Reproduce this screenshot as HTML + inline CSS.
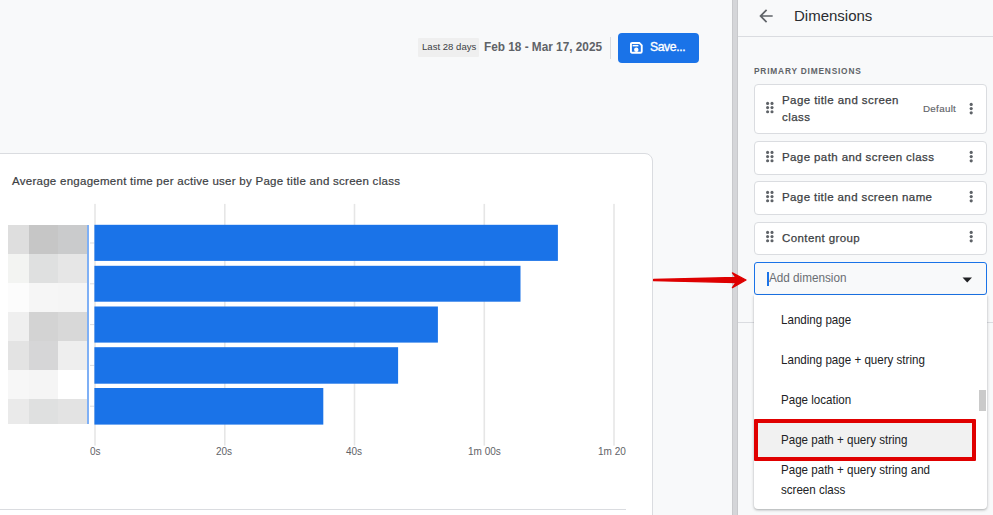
<!DOCTYPE html>
<html><head><meta charset="utf-8">
<style>
*{margin:0;padding:0;box-sizing:border-box}
html,body{width:993px;height:515px;overflow:hidden;background:#f8f9fa;font-family:"Liberation Sans",sans-serif;position:relative}
.a{position:absolute}
.t{position:absolute;white-space:nowrap;line-height:1}
</style></head><body>

<!-- top bar -->
<div class="a" style="left:418px;top:38px;width:61px;height:19px;background:#efefef;border-radius:1px"></div>
<div class="t" style="left:421.5px;top:42.4px;font-size:9.9px;color:#3c4043;transform:scaleX(0.97);transform-origin:0 0">Last 28 days</div>
<div class="t" style="left:484px;top:41.2px;font-size:12.8px;font-weight:700;color:#5f6368;transform:scaleX(0.922);transform-origin:0 0">Feb 18 - Mar 17, 2025</div>
<div class="a" style="left:610px;top:37px;width:1px;height:22px;background:#dadce0"></div>
<div class="a" style="left:618px;top:33px;width:81px;height:30px;background:#1a73e8;border-radius:4px"></div>
<svg class="a" style="left:630px;top:41.5px" width="13" height="12" viewBox="0 0 13 12">
 <path d="M2.2,0.95 H9.3 L11.75,3.4 V9.5 Q11.75,10.75 10.5,10.75 H2.2 Q0.95,10.75 0.95,9.5 V2.2 Q0.95,0.95 2.2,0.95 Z" stroke="#fff" stroke-width="1.9" fill="none"/>
 <rect x="2.6" y="2.9" width="5.8" height="1.5" fill="#fff"/>
 <circle cx="6.3" cy="7.8" r="2.2" fill="#fff"/>
</svg>
<div class="t" style="left:650px;top:40.6px;font-size:12.2px;letter-spacing:-0.4px;-webkit-text-stroke:0.35px #fff;color:#fff">Save...</div>

<!-- chart card -->
<div class="a" style="left:-10px;top:153px;width:663px;height:400px;background:#fff;border:1px solid #dadce0;border-radius:8px"></div>
<div class="t" style="left:12px;top:176px;font-size:11.5px;letter-spacing:0.27px;-webkit-text-stroke:0.2px #3c4043;color:#3c4043">Average engagement time per active user by Page title and screen class</div>

<div class="a" style="left:0;top:153px;width:626px;height:362px;overflow:hidden">
 <svg class="a" style="left:0;top:0" width="626" height="362" viewBox="0 153 626 362">
  <g fill="#e6e6e6">
   <rect x="94.2" y="203.9" width="1.6" height="241.7"/>
   <rect x="224" y="203.9" width="1.6" height="241.7"/>
   <rect x="353.7" y="203.9" width="1.6" height="241.7"/>
   <rect x="483.5" y="203.9" width="1.6" height="241.7"/>
   <rect x="613.2" y="203.9" width="1.6" height="241.7"/>
  </g>
  <g fill="#dadce0">
   <rect x="90" y="242.5" width="4.5" height="1"/>
   <rect x="90" y="283.3" width="4.5" height="1"/>
   <rect x="90" y="324.1" width="4.5" height="1"/>
   <rect x="90" y="364.9" width="4.5" height="1"/>
   <rect x="90" y="405.7" width="4.5" height="1"/>
  </g>
  <g fill="#1a73e8">
   <rect x="94.4" y="224.8" width="463.5" height="36.1"/>
   <rect x="94.4" y="265.8" width="426.1" height="35.9"/>
   <rect x="94.4" y="306.5" width="343.5" height="36.1"/>
   <rect x="94.4" y="347.2" width="303.7" height="36.5"/>
   <rect x="94.4" y="388" width="228.9" height="36.6"/>
  </g>
 </svg>
 <!-- axis labels -->
 <div class="t" style="left:90px;top:294px;font-size:10px;color:#5f6368">0s</div>
 <div class="t" style="left:216px;top:294px;font-size:10px;color:#5f6368">20s</div>
 <div class="t" style="left:346px;top:294px;font-size:10px;color:#5f6368">40s</div>
 <div class="t" style="left:468px;top:294px;font-size:10px;color:#5f6368">1m 00s</div>
 <div class="t" style="left:598px;top:294px;font-size:10px;color:#5f6368">1m 20s</div>
 <!-- bottom line -->
 <div class="a" style="left:0;top:356px;width:626px;height:1px;background:#dadce0"></div>
</div>

<!-- mosaic -->
<div class="a" style="left:8px;top:225px;width:80px;height:199px;display:grid;grid-template-columns:21px 29px 30px;grid-template-rows:29px 29px 29px 29px 29px 29px 25px">
 <div style="background:#dedede"></div><div style="background:#c6c6c6"></div><div style="background:#cacbcc"></div>
 <div style="background:#f3f4f2"></div><div style="background:#dfe0e0"></div><div style="background:#e6e6e6"></div>
 <div style="background:#fcfcfc"></div><div style="background:#f6f6f6"></div><div style="background:#f5f5f5"></div>
 <div style="background:#efefef"></div><div style="background:#d3d3d3"></div><div style="background:#d8d8d8"></div>
 <div style="background:#e3e3e3"></div><div style="background:#d6d6d7"></div><div style="background:#eeeeee"></div>
 <div style="background:#f7f7f7"></div><div style="background:#f5f5f5"></div><div style="background:#ffffff"></div>
 <div style="background:#eaeaea"></div><div style="background:#dfe0e0"></div><div style="background:#e3e3e3"></div>
</div>
<div class="a" style="left:87px;top:225px;width:2px;height:199px;background:#7fb0f5"></div>

<!-- gray splitter -->
<div class="a" style="left:732px;top:0;width:6px;height:515px;background:#d5d6d9;border-left:1px solid #c8c9cc;border-right:1px solid #c8c9cc"></div>

<!-- right panel -->
<div class="a" style="left:738px;top:36px;width:255px;height:1px;background:#dadce0"></div>
<svg class="a" style="left:755.8px;top:6px" width="20" height="20" viewBox="0 0 24 24"><path d="M20 11H7.83l5.59-5.59L12 4l-8 8 8 8 1.41-1.41L7.83 13H20v-2z" fill="#5f6368"/></svg>
<div class="t" style="left:794px;top:8px;font-size:15px;color:#2a2c30">Dimensions</div>
<div class="t" style="left:754.3px;top:65.9px;font-size:9.4px;font-weight:700;letter-spacing:0.9px;color:#5f6368;transform:scaleX(0.89);transform-origin:0 0">PRIMARY DIMENSIONS</div>

<div class="a" style="left:754px;top:84px;width:233px;height:50px;background:#fff;border:1px solid #dadce0;border-radius:4px"></div>
<div class="a" style="left:754px;top:141px;width:233px;height:34px;background:#fff;border:1px solid #dadce0;border-radius:4px"></div>
<div class="a" style="left:754px;top:181px;width:233px;height:34px;background:#fff;border:1px solid #dadce0;border-radius:4px"></div>
<div class="a" style="left:754px;top:222px;width:233px;height:33px;background:#fff;border:1px solid #dadce0;border-radius:4px"></div>

<div class="t" style="left:782px;top:92.3px;font-size:11.5px;letter-spacing:0.42px;line-height:16.3px;-webkit-text-stroke:0.25px #3c4043;color:#3c4043">Page title and screen<br>class</div>
<div class="t" style="left:923px;top:103.7px;font-size:9.8px;letter-spacing:0.3px;-webkit-text-stroke:0.15px #5f6368;color:#5f6368">Default</div>
<div class="t" style="left:782px;top:151.7px;font-size:11.5px;letter-spacing:0.4px;-webkit-text-stroke:0.25px #3c4043;color:#3c4043">Page path and screen class</div>
<div class="t" style="left:782px;top:191.7px;font-size:11.5px;letter-spacing:0.4px;-webkit-text-stroke:0.25px #3c4043;color:#3c4043">Page title and screen name</div>
<div class="t" style="left:782px;top:232.7px;font-size:11.5px;letter-spacing:0.4px;-webkit-text-stroke:0.25px #3c4043;color:#3c4043">Content group</div>

<!-- drag icons & kebabs -->
<svg class="a" style="left:764px;top:100px" width="12" height="16"><g fill="#5f6368"><circle cx="3.6" cy="3.4" r="1.55"/><circle cx="8" cy="3.4" r="1.55"/><circle cx="3.6" cy="7.6" r="1.55"/><circle cx="8" cy="7.6" r="1.55"/><circle cx="3.6" cy="11.8" r="1.55"/><circle cx="8" cy="11.8" r="1.55"/></g></svg>
<svg class="a" style="left:764px;top:149px" width="12" height="16"><g fill="#5f6368"><circle cx="3.6" cy="3.4" r="1.55"/><circle cx="8" cy="3.4" r="1.55"/><circle cx="3.6" cy="7.6" r="1.55"/><circle cx="8" cy="7.6" r="1.55"/><circle cx="3.6" cy="11.8" r="1.55"/><circle cx="8" cy="11.8" r="1.55"/></g></svg>
<svg class="a" style="left:764px;top:189px" width="12" height="16"><g fill="#5f6368"><circle cx="3.6" cy="3.4" r="1.55"/><circle cx="8" cy="3.4" r="1.55"/><circle cx="3.6" cy="7.6" r="1.55"/><circle cx="8" cy="7.6" r="1.55"/><circle cx="3.6" cy="11.8" r="1.55"/><circle cx="8" cy="11.8" r="1.55"/></g></svg>
<svg class="a" style="left:764px;top:229px" width="12" height="16"><g fill="#5f6368"><circle cx="3.6" cy="3.4" r="1.55"/><circle cx="8" cy="3.4" r="1.55"/><circle cx="3.6" cy="7.6" r="1.55"/><circle cx="8" cy="7.6" r="1.55"/><circle cx="3.6" cy="11.8" r="1.55"/><circle cx="8" cy="11.8" r="1.55"/></g></svg>

<svg class="a" style="left:966px;top:101px" width="10" height="16"><g fill="#5f6368"><circle cx="5.2" cy="3.4" r="1.6"/><circle cx="5.2" cy="7.6" r="1.6"/><circle cx="5.2" cy="11.8" r="1.6"/></g></svg>
<svg class="a" style="left:966px;top:149px" width="10" height="16"><g fill="#5f6368"><circle cx="5.2" cy="3.4" r="1.6"/><circle cx="5.2" cy="7.6" r="1.6"/><circle cx="5.2" cy="11.8" r="1.6"/></g></svg>
<svg class="a" style="left:966px;top:189px" width="10" height="16"><g fill="#5f6368"><circle cx="5.2" cy="3.4" r="1.6"/><circle cx="5.2" cy="7.6" r="1.6"/><circle cx="5.2" cy="11.8" r="1.6"/></g></svg>
<svg class="a" style="left:966px;top:229px" width="10" height="16"><g fill="#5f6368"><circle cx="5.2" cy="3.4" r="1.6"/><circle cx="5.2" cy="7.6" r="1.6"/><circle cx="5.2" cy="11.8" r="1.6"/></g></svg>

<!-- input -->
<div class="a" style="left:754px;top:262px;width:233px;height:33px;border:1px solid #1a73e8;border-radius:3px"></div>
<div class="a" style="left:767px;top:272px;width:2px;height:14px;background:#1a73e8"></div>
<div class="t" style="left:768.6px;top:272.2px;font-size:12.4px;color:#6a6e73;transform:scaleX(0.945);transform-origin:0 0">Add dimension</div>
<svg class="a" style="left:962px;top:277px" width="11" height="6"><path d="M0.5,0.5 H10 L5.25,5.5 Z" fill="#202124"/></svg>

<!-- line under panel -->
<div class="a" style="left:738px;top:322px;width:255px;height:1px;background:#dadce0"></div>

<!-- dropdown -->
<div class="a" style="left:754px;top:295px;width:233px;height:214px;background:#fff;border-radius:0 0 4px 4px;box-shadow:0 1px 3px rgba(60,64,67,.3),0 1px 2px rgba(60,64,67,.15)"></div>
<div class="a" style="left:979px;top:390px;width:7px;height:21px;background:#cacaca"></div>
<div class="a" style="left:754px;top:419px;width:222px;height:42px;background:#f1f1f1;border:4px solid #e00000;border-radius:1px"></div>
<div class="t" style="left:781px;top:313.5px;font-size:12.2px;color:#202124;transform:scaleX(0.95);transform-origin:0 0">Landing page</div>
<div class="t" style="left:781px;top:353.5px;font-size:12.2px;color:#202124;transform:scaleX(0.95);transform-origin:0 0">Landing page + query string</div>
<div class="t" style="left:781px;top:393.5px;font-size:12.2px;color:#202124;transform:scaleX(0.95);transform-origin:0 0">Page location</div>
<div class="t" style="left:781px;top:433.5px;font-size:12.2px;color:#202124;transform:scaleX(0.95);transform-origin:0 0">Page path + query string</div>
<div class="t" style="left:781px;top:460px;font-size:12.2px;line-height:20px;color:#202124;transform:scaleX(0.95);transform-origin:0 0">Page path + query string and<br>screen class</div>

<!-- red arrow -->
<svg class="a" style="left:650px;top:268px" width="100" height="24" viewBox="0 0 100 24">
 <path d="M3.6,11.5 L86,9.5 L82.4,4.9 L96,12 L82.4,19.6 L86,14.6 L3.6,12.7 Z" fill="#de0000" stroke="#de0000" stroke-width="1.3" stroke-linejoin="round"/>
</svg>
</body></html>
